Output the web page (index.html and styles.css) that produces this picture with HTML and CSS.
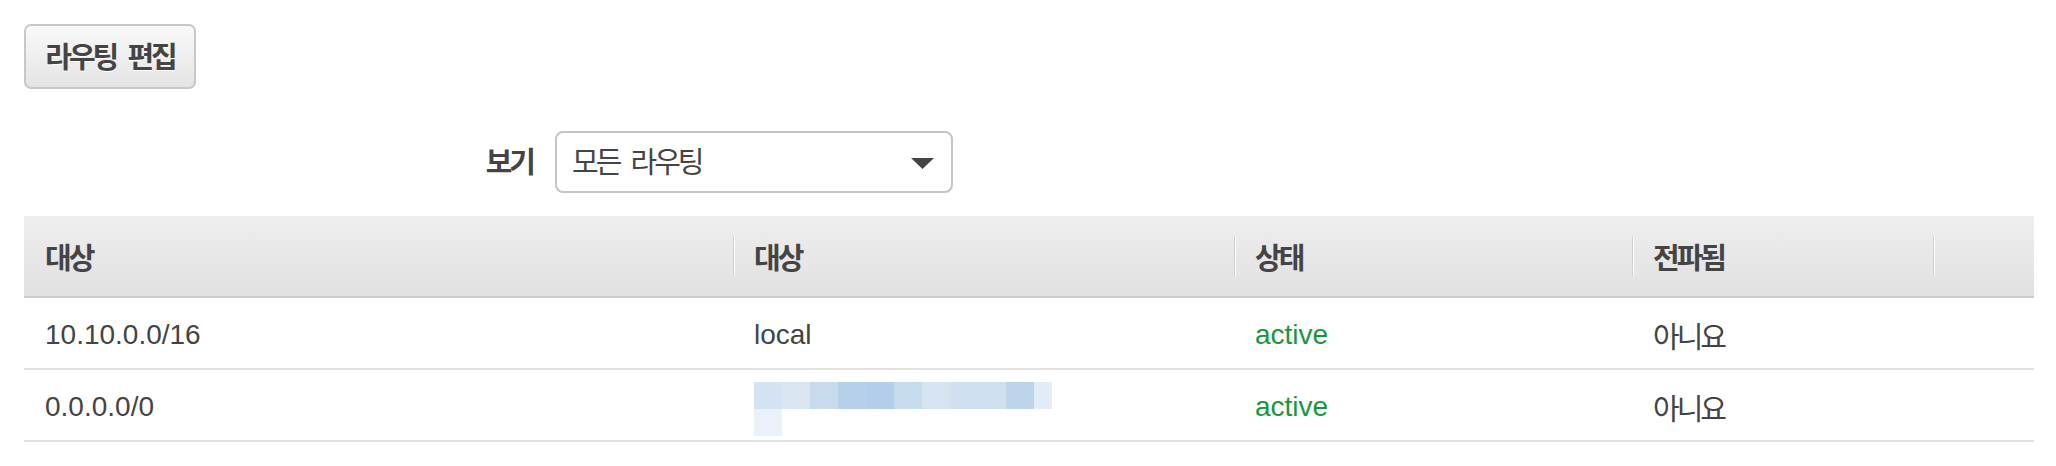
FILE: index.html
```html
<!DOCTYPE html>
<html lang="ko">
<head>
<meta charset="utf-8">
<title>라우팅</title>
<link rel="stylesheet" href="styles.css">
</head>
<body>
<div class="page">
  <div class="toolbar">
    <button class="btn ko">라우팅 편집</button>
  </div>
  <div class="filter">
    <label class="filter-label ko">보기</label>
    <div class="select">
      <span class="select-text ko">모든 라우팅</span>
      <svg class="caret" width="23" height="11" viewBox="0 0 23 11"><polygon points="0,0 23,0 11.5,11" fill="#444"/></svg>
    </div>
  </div>
  <table class="routes">
    <colgroup>
      <col class="c-dest"><col class="c-target"><col class="c-state"><col class="c-prop"><col class="c-rest">
    </colgroup>
    <thead>
      <tr>
        <th><div class="hcell first ko">대상</div></th>
        <th><div class="hcell ko">대상</div></th>
        <th><div class="hcell ko">상태</div></th>
        <th><div class="hcell ko">전파됨</div></th>
        <th><div class="hcell"></div></th>
      </tr>
    </thead>
    <tbody>
      <tr>
        <td>10.10.0.0/16</td>
        <td>local</td>
        <td class="ok">active</td>
        <td class="ko">아니요</td>
        <td></td>
      </tr>
      <tr>
        <td>0.0.0.0/0</td>
        <td class="masked">
          <div class="mosaic">
            <span class="m1"></span><span class="m2"></span><span class="m3"></span><span class="m4"></span><span class="m5"></span><span class="m6"></span><span class="m7"></span><span class="m8"></span><span class="m8"></span><span class="m10"></span><span class="m11"></span>
            <span class="m12"></span>
          </div>
        </td>
        <td class="ok">active</td>
        <td class="ko">아니요</td>
        <td></td>
      </tr>
    </tbody>
  </table>
</div>
</body>
</html>
```

FILE: styles.css
```css
* { box-sizing: border-box; }

html, body {
  margin: 0;
  padding: 0;
  background: #ffffff;
}

body {
  width: 2056px;
  font-family: "Liberation Sans", Arial, "Noto Sans CJK KR", sans-serif;
  font-size: 28px;
  color: #444444;
}

.ko {
  font-family: "Noto Sans CJK KR", "Liberation Sans", sans-serif;
  letter-spacing: -3px;
  word-spacing: 6px;
}

.page {
  padding: 24px 22px 0 24px;
}

.toolbar {
  display: flex;
}

.btn {
  height: 65px;
  width: 172px;
  padding: 0 0 4px 0;
  border: 2px solid #c8c8c8;
  border-radius: 7px;
  background: linear-gradient(#f9f9f9, #e4e4e4);
  color: #444444;
  font-size: 29px;
  font-weight: 700;
  text-shadow: 0 1px 0 #ffffff;
  display: flex;
  align-items: center;
  justify-content: center;
}

.filter {
  margin-top: 42px;
  display: grid;
  grid-template-columns: 509px 398px;
  column-gap: 22px;
  align-items: center;
}

.filter-label {
  text-align: right;
  font-weight: 700;
  font-size: 29px;
  color: #444444;
  padding-bottom: 4px;
}

.select {
  height: 62px;
  border: 2px solid #c4c4c4;
  border-radius: 8px;
  background: #ffffff;
  display: flex;
  align-items: center;
  justify-content: space-between;
  padding: 0 17px 0 15px;
}

.select-text {
  font-size: 29px;
  color: #444444;
  padding-bottom: 4px;
}

.caret {
  display: block;
  margin-top: 2px;
}

.routes {
  margin-top: 23px;
  width: 2010px;
  border-collapse: collapse;
  table-layout: fixed;
}

.c-dest { width: 709px; }
.c-target { width: 501px; }
.c-state { width: 398px; }
.c-prop { width: 301px; }
.c-rest { width: 101px; }

.routes thead tr {
  background: linear-gradient(#eeeeee, #e1e1e1);
}

.routes th {
  height: 81px;
  padding: 0;
  border-bottom: 2px solid #cccccc;
  text-align: left;
  vertical-align: middle;
}

.hcell {
  height: 39px;
  display: flex;
  align-items: center;
  padding-left: 20px;
  border-left: 1px solid #cfcfcf;
  box-shadow: inset 1px 0 0 #ffffff;
  font-weight: 700;
  font-size: 29px;
  color: #444444;
}

.hcell.first {
  border-left: 1px solid transparent;
  box-shadow: none;
}

.routes td {
  height: 72px;
  padding: 3px 21px 0 21px;
  border-bottom: 2px solid #e1e1e1;
  vertical-align: middle;
  font-size: 28px;
  color: #444444;
  white-space: nowrap;
}

.routes td.masked {
  padding-top: 0;
}

.routes td.ko {
  font-size: 29px;
}

.routes td.ok {
  color: #14993a;
}

.mosaic {
  margin-top: 8px;
  display: grid;
  grid-template-columns: repeat(10, 28px) 18px;
  grid-auto-rows: 27px;
}

.mosaic span { display: block; }
.m1 { background: #d4e3f2; }
.m2 { background: #dbe6f3; }
.m3 { background: #c7dbee; }
.m4 { background: #b6d0ea; }
.m5 { background: #b3ceea; }
.m6 { background: #c7dbee; }
.m7 { background: #d6e4f2; }
.m8 { background: #d0e0f0; }
.m10 { background: #bed4eb; }
.m11 { background: #e2ecf6; }
.m12 { background: #eaf1f9; }
```
